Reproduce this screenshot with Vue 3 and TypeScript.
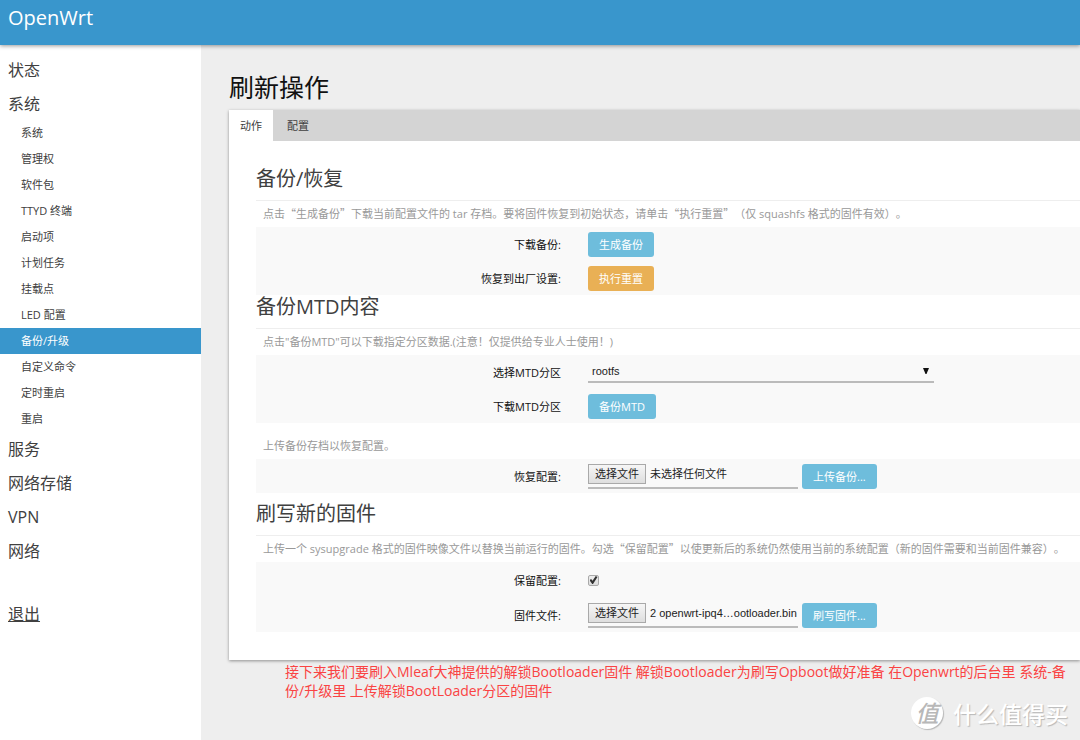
<script setup lang="ts">
import { ref } from 'vue'

interface MenuEntry {
  label: string
  children?: string[]
}

interface Piece {
  text: string
  wide: boolean
}

const menu: MenuEntry[] = [
  { label: '状态' },
  {
    label: '系统',
    children: [
      '系统', '管理权', '软件包', 'TTYD 终端', '启动项', '计划任务',
      '挂载点', 'LED 配置', '备份/升级', '自定义命令', '定时重启', '重启',
    ],
  },
  { label: '服务' },
  { label: '网络存储' },
  { label: 'VPN' },
  { label: '网络' },
]

const activeItem = ref('备份/升级')
const partition = ref('rootfs')
const keepSettings = ref(true)
const restoreName = ref('未选择任何文件')
const firmwareName = ref('2 openwrt-ipq4…ootloader.bin')

// Chinese quotation marks take a full-width cell, so they are set in the CJK family.
function pieces(text: string): Piece[] {
  return text
    .split(/([“”])/)
    .filter((t) => t !== '')
    .map((t) => ({ text: t, wide: t === '“' || t === '”' }))
}

const backupHint = pieces('点击“生成备份”下载当前配置文件的 tar 存档。要将固件恢复到初始状态，请单击“执行重置”（仅 squashfs 格式的固件有效）。')
const flashHint = pieces('上传一个 sysupgrade 格式的固件映像文件以替换当前运行的固件。勾选“保留配置”以使更新后的系统仍然使用当前的系统配置（新的固件需要和当前固件兼容）。')

function pickedName(event: Event, fallback: string): string {
  const files = (event.target as HTMLInputElement).files
  return files && files.length > 0 ? files[0].name : fallback
}
</script>

<template>
  <div class="page">
    <header class="topbar">
      <a class="brand" href="#">OpenWrt</a>
    </header>

    <div class="body">
      <nav class="sidebar">
        <ul class="menu">
          <li v-for="entry in menu" :key="entry.label">
            <a class="menu-link" href="#">{{ entry.label }}</a>
            <ul v-if="entry.children" class="submenu">
              <li v-for="child in entry.children" :key="child">
                <a
                  class="sub-link"
                  :class="{ active: child === activeItem }"
                  href="#"
                  @click.prevent="activeItem = child"
                >{{ child }}</a>
              </li>
            </ul>
          </li>
          <li class="logout"><a class="menu-link" href="#">退出</a></li>
        </ul>
      </nav>

      <main class="content">
        <h2 class="title">刷新操作</h2>

        <div class="panel">
          <div class="tabs">
            <a class="tab selected" href="#">动作</a>
            <a class="tab" href="#">配置</a>
          </div>

          <div class="sections">
            <section>
              <h3>备份/恢复</h3>
              <p class="hint"><span v-for="(p, i) in backupHint" :key="i" :class="{ wide: p.wide }">{{ p.text }}</span></p>
              <div class="rows">
                <div class="row">
                  <label for="make-backup">下载备份:</label>
                  <div class="field"><button id="make-backup" type="button" class="btn">生成备份</button></div>
                </div>
                <div class="row">
                  <label for="do-reset">恢复到出厂设置:</label>
                  <div class="field"><button id="do-reset" type="button" class="btn warn">执行重置</button></div>
                </div>
              </div>
            </section>

            <section>
              <h3>备份MTD内容</h3>
              <p class="hint">点击"备份MTD"可以下载指定分区数据.(注意！仅提供给专业人士使用！)</p>
              <div class="rows">
                <div class="row">
                  <label for="mtd-part">选择MTD分区</label>
                  <div class="field">
                    <div class="select-box">
                      <select id="mtd-part" v-model="partition">
                        <option value="rootfs">rootfs</option>
                      </select>
                      <svg class="caret" viewBox="0 0 6 6" aria-hidden="true"><path d="M0 0H6L3.5 6H2.5Z" /></svg>
                    </div>
                  </div>
                </div>
                <div class="row">
                  <label for="mtd-save">下载MTD分区</label>
                  <div class="field"><button id="mtd-save" type="button" class="btn">备份MTD</button></div>
                </div>
              </div>
            </section>

            <section class="restore">
              <p class="hint">上传备份存档以恢复配置。</p>
              <div class="rows">
                <div class="row">
                  <label for="restore-file">恢复配置:</label>
                  <div class="field">
                    <div class="file-box">
                      <span class="file-button">选择文件</span>
                      <span class="file-name">{{ restoreName }}</span>
                      <input id="restore-file" type="file" @change="restoreName = pickedName($event, restoreName)" />
                    </div>
                    <button type="button" class="btn">上传备份...</button>
                  </div>
                </div>
              </div>
            </section>

            <section>
              <h3>刷写新的固件</h3>
              <p class="hint"><span v-for="(p, i) in flashHint" :key="i" :class="{ wide: p.wide }">{{ p.text }}</span></p>
              <div class="rows">
                <div class="row tall">
                  <label for="keep">保留配置:</label>
                  <div class="field"><input id="keep" v-model="keepSettings" type="checkbox" class="check" /></div>
                </div>
                <div class="row">
                  <label for="image-file">固件文件:</label>
                  <div class="field">
                    <div class="file-box">
                      <span class="file-button">选择文件</span>
                      <span class="file-name">{{ firmwareName }}</span>
                      <input id="image-file" type="file" @change="firmwareName = pickedName($event, firmwareName)" />
                    </div>
                    <button type="button" class="btn">刷写固件...</button>
                  </div>
                </div>
              </div>
            </section>
          </div>
        </div>

        <p class="note">
          接下来我们要刷入Mleaf大神提供的解锁Bootloader固件 解锁Bootloader为刷写Opboot做好准备 在Openwrt的后台里 系统-备<br />份/升级里 上传解锁BootLoader分区的固件
        </p>
      </main>
    </div>

    <div class="watermark">
      <span class="seal">值</span>
      <span class="seal-text">什么值得买</span>
    </div>
  </div>
</template>

<style>
body {
  margin: 0;
  background: #eeeeee;
}
</style>

<style scoped>
* {
  box-sizing: border-box;
}

.page {
  position: relative;
  display: flex;
  flex-direction: column;
  min-height: 100vh;
  overflow: hidden;
  font-family: "Open Sans", "Noto Sans CJK SC", sans-serif;
  font-size: 11px;
  color: #404040;
  background: #eeeeee;
}

a {
  color: inherit;
  text-decoration: none;
}

ul {
  margin: 0;
  padding: 0;
  list-style: none;
}

.topbar {
  position: relative;
  z-index: 1;
  height: 45px;
  padding: 5px 8px;
  background: #3996cc;
  box-shadow: 0 1px 4px rgba(0, 0, 0, 0.4);
}

.brand {
  display: block;
  font-size: 20px;
  line-height: 26px;
  color: #ffffff;
}

.body {
  display: flex;
  flex: 1;
}

.sidebar {
  flex: 0 0 201px;
  padding-top: 8px;
  background: #ffffff;
}

.menu-link {
  display: block;
  padding-left: 8px;
  font-size: 16px;
  line-height: 34px;
}

.sub-link {
  display: block;
  padding-left: 21px;
  line-height: 26px;
}

.submenu {
  margin-top: -1px;
}

.sub-link.active {
  color: #ffffff;
  background: #3996cc;
}

.logout {
  margin-top: 29px;
}

.logout .menu-link {
  text-decoration: underline;
}

.content {
  flex: 1;
  min-width: 0;
  padding: 24px 0 0 28px;
}

.title {
  margin: 0;
  font-size: 25px;
  font-weight: 400;
  line-height: 36px;
  color: #111111;
  padding-bottom: 5px;
}

.panel {
  padding-bottom: 28px;
  background: #ffffff;
  box-shadow: 0 1px 3px rgba(0, 0, 0, 0.4);
}

.tabs {
  display: flex;
  background: #d4d4d4;
}

.tab {
  padding: 0 11px;
  line-height: 31px;
}

.tab + .tab {
  padding-left: 14px;
}

.tab.selected {
  background: #ffffff;
}

.sections {
  padding: 26px 0 0 27px;
}

h3 {
  margin: 0;
  padding-bottom: 9px;
  border-bottom: 1px solid #eeeeee;
  font-size: 20px;
  font-weight: 400;
  line-height: 24px;
}

.hint {
  margin: 0;
  padding-left: 7px;
  line-height: 26px;
  color: #999999;
  white-space: nowrap;
  text-spacing-trim: space-all;
}

.wide {
  font-family: "Noto Sans CJK SC", sans-serif;
  line-height: 1;
}

.rows {
  background: #f9f9f9;
}

.row {
  display: grid;
  grid-template-columns: 305px 1fr;
  column-gap: 27px;
  align-items: center;
  min-height: 34px;
}

.row.tall {
  min-height: 36px;
}

.row label {
  text-align: right;
  color: #111111;
}

.field {
  display: flex;
  align-items: center;
  gap: 4px;
}

.btn {
  height: 25px;
  padding: 0 11px;
  border: 0;
  border-radius: 3px;
  font: inherit;
  color: #ffffff;
  background: #6ebddc;
}

.btn.warn {
  background: #e9b055;
}

.select-box {
  position: relative;
  flex: 0 1 346px;
}

select {
  display: block;
  width: 100%;
  height: 22px;
  padding: 0 4px;
  border: 0;
  border-bottom: 2px solid #bbbbbb;
  border-radius: 0;
  appearance: none;
  font-family: "Liberation Sans", "Noto Sans CJK SC", sans-serif;
  font-size: 11px;
  color: #222222;
  background: transparent;
}

.caret {
  position: absolute;
  top: 7px;
  right: 5px;
  width: 6px;
  height: 6px;
  fill: #111111;
  pointer-events: none;
}

.restore {
  padding-top: 10px;
}

.restore + section {
  padding-top: 9px;
}

.file-box {
  position: relative;
  display: flex;
  align-items: flex-start;
  width: 210px;
  height: 25px;
  border-bottom: 2px solid #bbbbbb;
  font-family: "Liberation Sans", "Noto Sans CJK SC", sans-serif;
  line-height: 18px;
  color: #222222;
  white-space: nowrap;
}

.file-box input {
  position: absolute;
  inset: 0;
  width: 100%;
  opacity: 0;
}

.file-button {
  padding: 0 6px;
  border: 1px solid #a9a9a9;
  background: linear-gradient(#f6f6f6, #dedede);
}

.file-name {
  padding: 1px 0 0 4px;
}

.check {
  display: grid;
  place-items: center;
  width: 11px;
  height: 11px;
  margin: 0;
  border: 1px solid #a9a9a9;
  border-radius: 2px;
  appearance: none;
  background: linear-gradient(#eeeeee, #dddddd);
}

.check:checked::after {
  content: "";
  width: 8px;
  height: 8px;
  background: #333333;
  clip-path: polygon(0 52%, 20% 36%, 38% 58%, 78% 0, 100% 14%, 44% 100%, 34% 100%);
}

.note {
  margin: 0;
  padding: 2px 0 0 56px;
  font-size: 14px;
  line-height: 19px;
  color: #fa4343;
  white-space: nowrap;
}

.watermark {
  position: absolute;
  right: 12px;
  bottom: 11px;
  display: flex;
  align-items: center;
  gap: 10px;
  font-family: "Noto Sans CJK SC", sans-serif;
  color: #ffffff;
}

.seal {
  width: 32px;
  height: 32px;
  border-radius: 50%;
  font-size: 23px;
  font-style: italic;
  font-weight: 500;
  line-height: 31px;
  text-align: center;
  color: #b8b8b8;
  background: #ffffff;
  box-shadow: 1px 1px 1px #b8b8b8;
}

.seal-text {
  font-size: 23px;
  font-weight: 500;
  line-height: 32px;
  text-shadow: 1px 1px 1px #b8b8b8;
}
</style>
